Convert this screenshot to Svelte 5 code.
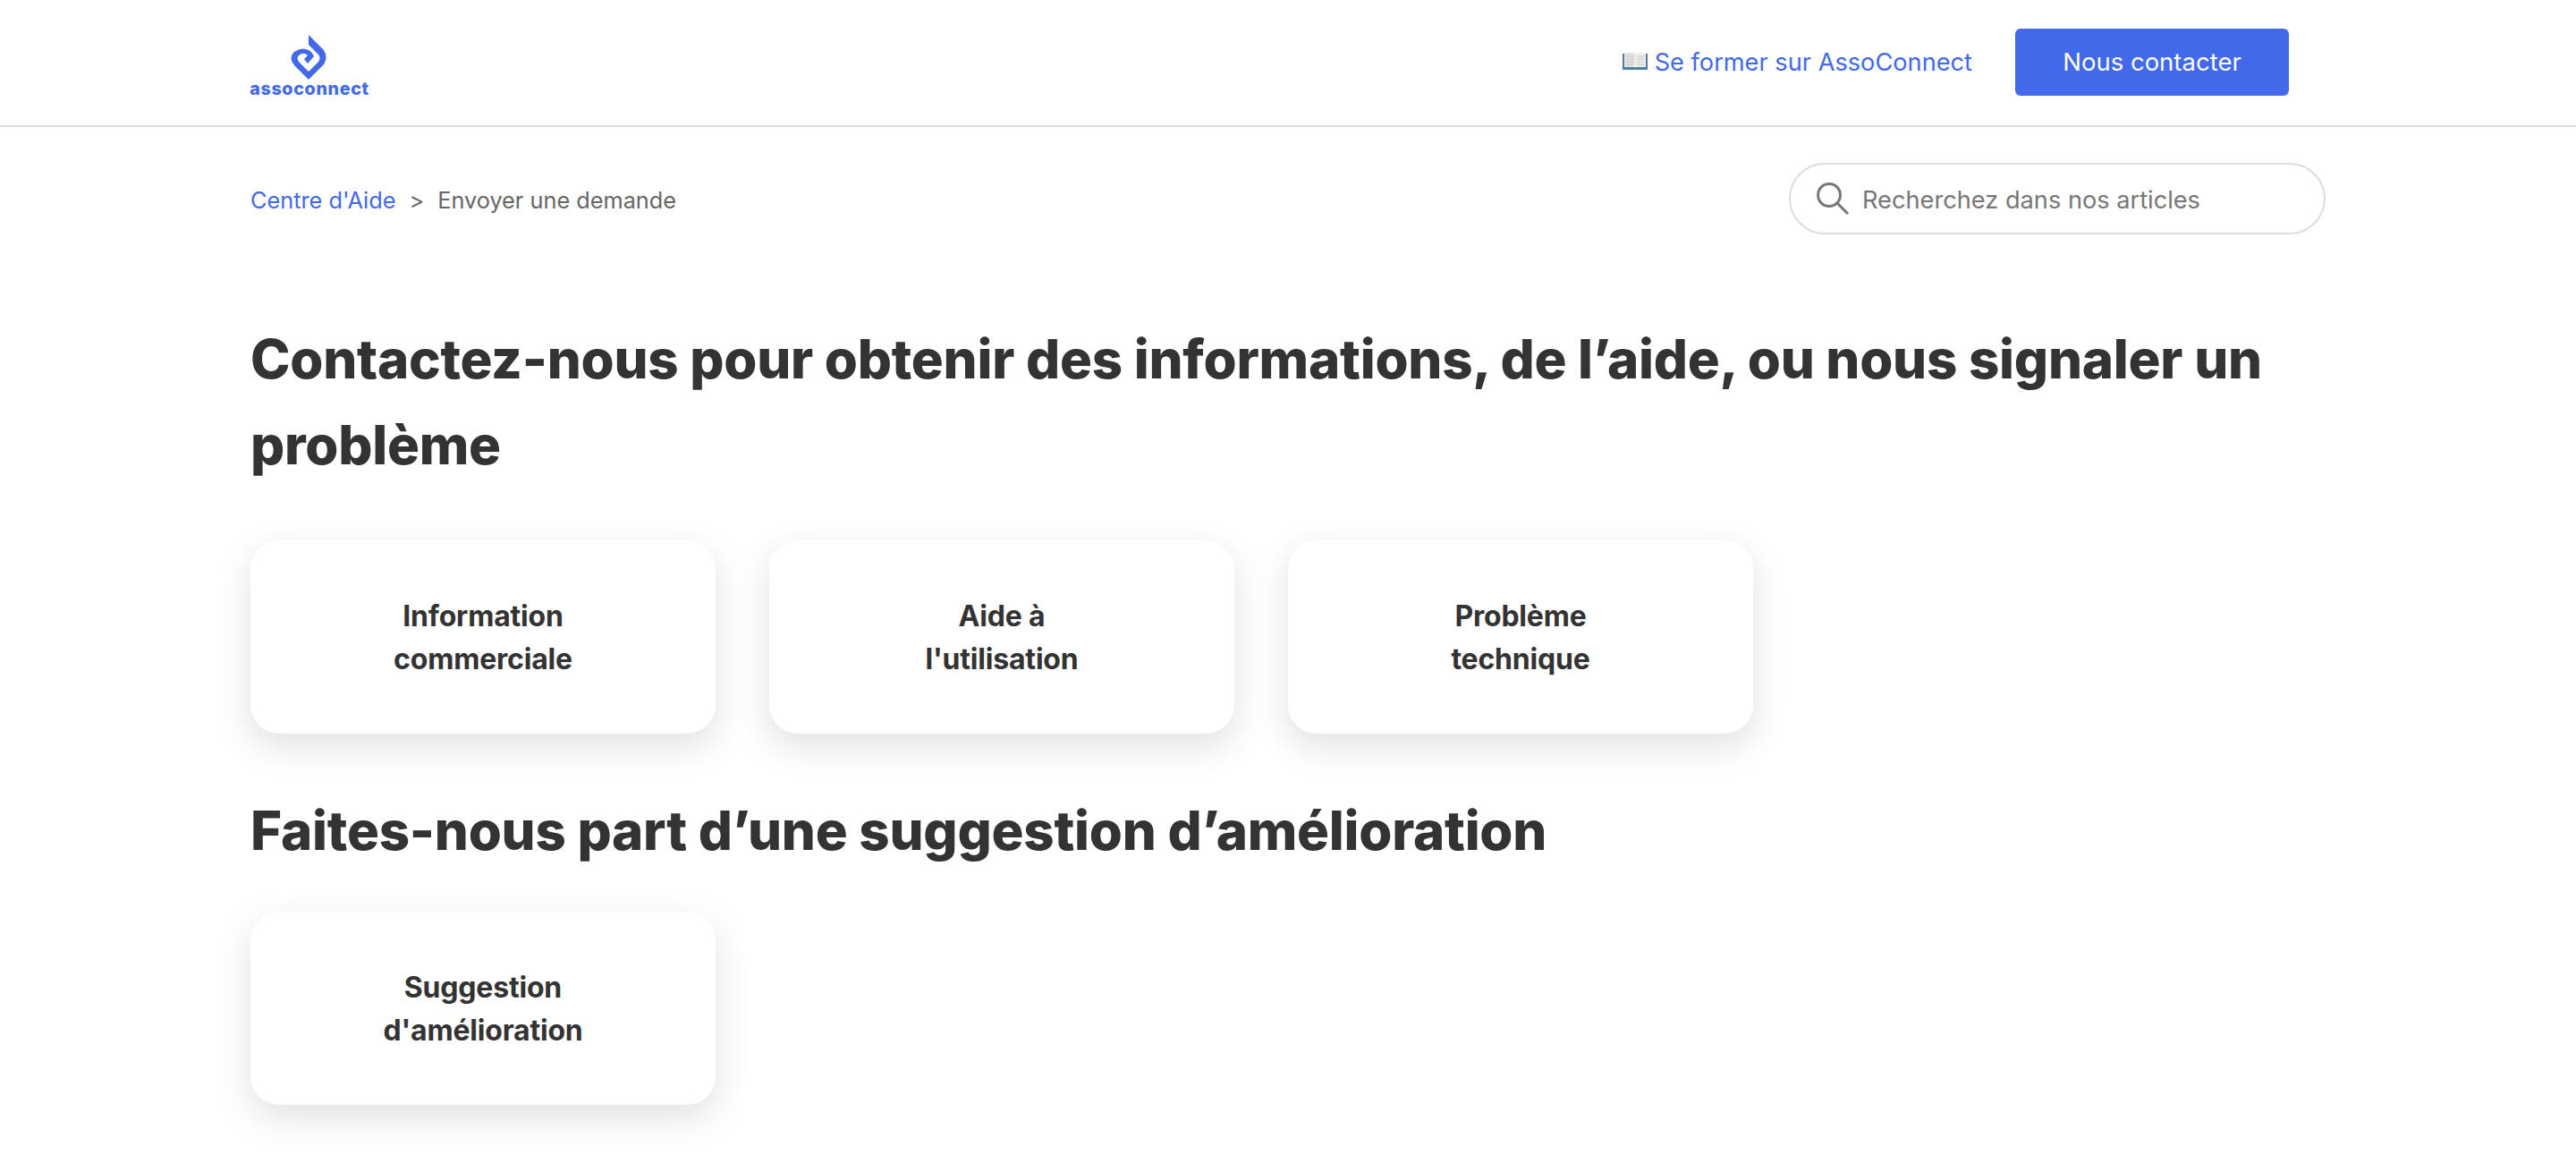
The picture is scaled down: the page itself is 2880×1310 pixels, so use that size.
<script>
	const contactCards = [
		['Information', 'commerciale'],
		["Aide à", "l'utilisation"],
		['Problème', 'technique']
	];
	const suggestionCards = [['Suggestion', "d'amélioration"]];
</script>

{#snippet cards(list)}
	<div class="cards">
		{#each list as lines}
			<a class="card" href="#top"><span>{lines[0]}<br />{lines[1]}</span></a>
		{/each}
	</div>
{/snippet}

<header>
	<div class="header-inner">
		<a class="logo" href="#top">
			<svg width="60" height="60" viewBox="0 0 60 60" aria-hidden="true">
				<path
					d="M29 6 L46 23 Q51 31 46 39 L29 56 L13 40 Q6 31 13 25 Q21 19 29 23 Q33 25 35 30 L28 38 L24 33 L28 29 Q25 26 21 27 Q14 30 18 36 L29 47 L40 36 Q43 31 40 28 L29 17 Z"
					fill="#4169e9"
				/>
			</svg>
			<span>assoconnect</span>
		</a>
		<nav>
			<a class="learn" href="#top">
				<svg width="28" height="20" viewBox="0 0 28 20" aria-hidden="true">
					<path d="M0 1h14v18H0z" fill="#4f7f9e" />
					<path d="M14 1h14v18H14z" fill="#4f7f9e" />
					<path d="M2 0h11q1 0 1 1v16q0-1-1-1H2z" fill="#e4e4e2" />
					<path d="M26 0H15q-1 0-1 1v16q0-1 1-1h11z" fill="#eeeeec" />
					<path d="M4 4h8M4 7h8M4 10h8M4 13h8M16 4h8M16 7h8M16 10h8M16 13h8" stroke="#c4c4c2" />
				</svg>
				Se former sur AssoConnect
			</a>
			<a class="contact" href="#top">Nous contacter</a>
		</nav>
	</div>
</header>

<main>
	<div class="topbar">
		<div class="crumbs">
			<a href="#top">Centre d'Aide</a>
			<span class="sep">&gt;</span>
			<span>Envoyer une demande</span>
		</div>
		<div class="search">
			<svg width="38" height="38" viewBox="0 0 38 38" aria-hidden="true">
				<circle cx="15" cy="15" r="12.5" fill="none" stroke="#777" stroke-width="3" />
				<path d="M24 24 L36 36" stroke="#777" stroke-width="3" />
			</svg>
			<span>Recherchez dans nos articles</span>
		</div>
	</div>

	<h1>Contactez-nous pour obtenir des informations, de l’aide, ou nous signaler un problème</h1>
	{@render cards(contactCards)}

	<h1 class="second">Faites-nous part d’une suggestion d’amélioration</h1>
	{@render cards(suggestionCards)}
</main>

<style>
	:global(body) {
		background: #fff;
		font-family: Inter, 'Liberation Sans', sans-serif;
		color: #333;
	}

	a {
		text-decoration: none;
	}

	header {
		height: 140px;
		border-bottom: 2px solid #ddd;
	}

	.header-inner {
		display: flex;
		justify-content: space-between;
		align-items: center;
		height: 100%;
		padding: 0 321px 0 280px;
	}

	.logo {
		display: flex;
		flex-direction: column;
		align-items: center;
		width: 132px;
		margin-top: 2px;
	}

	.logo span {
		margin-top: -4px;
		font-size: 19.6px;
		line-height: 20px;
		font-weight: 800;
		letter-spacing: 0.7px;
		color: #4169e9;
	}

	nav {
		display: flex;
		align-items: center;
		gap: 48px;
		margin-top: -2px;
	}

	.learn {
		display: flex;
		align-items: center;
		gap: 8px;
		font-size: 27.2px;
		color: #4169e9;
	}

	.contact {
		display: flex;
		align-items: center;
		justify-content: center;
		width: 306px;
		height: 75px;
		border-radius: 6px;
		background: #4169e9;
		color: #fff;
		font-size: 27.5px;
	}

	main {
		padding: 0 280px 80px;
	}

	.topbar {
		display: flex;
		justify-content: space-between;
		align-items: center;
		padding-top: 40px;
	}

	.crumbs {
		display: flex;
		gap: 15px;
		margin-top: 2px;
		font-size: 25.3px;
		color: #666;
	}

	.crumbs a {
		color: #4169e9;
	}

	.search {
		display: flex;
		align-items: center;
		gap: 14px;
		box-sizing: border-box;
		width: 600px;
		height: 80px;
		padding: 0 28px;
		border: 2px solid #ddd;
		border-radius: 40px;
		font-size: 27.2px;
		color: #777;
	}

	.search span {
		margin-top: 2px;
	}

	h1 {
		margin: 91px 0 0;
		font-size: 60px;
		line-height: 96px;
		font-weight: 800;
		letter-spacing: -0.26px;
		color: #333;
	}

	.second {
		margin-top: 60px;
	}

	.cards {
		display: flex;
		gap: 60px;
		margin-top: 59px;
	}

	.second + .cards {
		margin-top: 43px;
	}

	.card {
		display: flex;
		align-items: center;
		justify-content: center;
		text-align: center;
		width: 520px;
		height: 216px;
		border-radius: 32px;
		background: #fff;
		box-shadow: 0 14px 40px rgba(0, 0, 0, 0.12);
		font-size: 32px;
		line-height: 48px;
		font-weight: 700;
		letter-spacing: -0.2px;
		color: #333;
	}

	.card span {
		margin-top: 2px;
	}
</style>
